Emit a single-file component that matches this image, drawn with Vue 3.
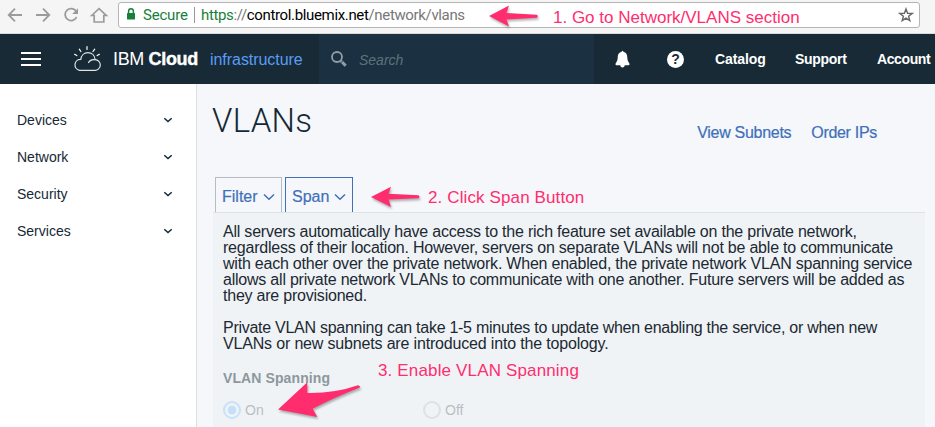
<script setup>
const menu = ['Devices', 'Network', 'Security', 'Services']
const spanInfo = [
  'All servers automatically have access to the rich feature set available on the private network,',
  'regardless of their location. However, servers on separate VLANs will not be able to communicate',
  'with each other over the private network. When enabled, the private network VLAN spanning service',
  'allows all private network VLANs to communicate with one another. Future servers will be added as',
  'they are provisioned.',
]
const spanNote = [
  'Private VLAN spanning can take 1-5 minutes to update when enabling the service, or when new',
  'VLANs or new subnets are introduced into the topology.',
]
</script>

<template>
  <div class="page">
    <div class="browser">
      <svg class="nav-icons" width="112" height="33" viewBox="0 0 112 33" fill="none" stroke="#9b9b9b" stroke-width="1.8">
        <path d="M22 15H9M15 8.700L8.700 15L15 21.300" />
        <path d="M36 15H49M43 8.700L49.300 15L43 21.300" />
        <path d="M76.300 11.500A6 6 0 1 0 76.600 17" />
        <path d="M78 8.300V14H72.200Z" fill="#9b9b9b" stroke="none" />
        <path d="M91.700 15.500L99 8.600L106.300 15.500H103.800V22H94.200V15.500Z" stroke-width="1.700" />
      </svg>
      <div class="address">
        <svg class="lock" width="10" height="13" viewBox="0 0 10 13">
          <path d="M2.600 6V3.500A2.100 2.300 0 0 1 7.400 3.500V6" fill="none" stroke="#178038" stroke-width="1.500" />
          <rect x="1" y="5" width="8" height="6.500" rx=".6" fill="#178038" />
        </svg>
        <span class="secure">Secure</span>
        <i class="divider"></i>
        <span class="url"><span class="scheme">https</span>://<b>control.bluemix.net</b>/network/vlans</span>
        <svg class="star" width="16" height="16" viewBox="0 0 16 16">
          <path d="M8 1.900L9.600 6.200L14.200 6.400L10.600 9.200L11.800 13.700L8 11.100L4.200 13.700L5.400 9.200L1.800 6.400L6.400 6.200Z" fill="none" stroke="#686868" stroke-width="1.400" />
        </svg>
      </div>
    </div>

    <header class="header">
      <div class="brand">
        <i class="burger"></i>
        <svg class="cloud" width="30" height="28" viewBox="0 0 30 28" fill="none" stroke="#fff" stroke-width="1.200" stroke-linecap="round">
          <path d="M7.500 25.300H22.800A5.300 5.300 0 0 0 23.200 14.700C22.700 10.300 19.600 7.700 15.900 7.700C12 7.700 9.200 10.500 8.800 14.400A5.500 5.500 0 0 0 7.500 25.300Z" stroke="#dce4e8" />
          <path d="M16.500 17.500C18 15.100 20.500 14.200 23 14.700" stroke="#dce4e8" />
          <path d="M2.600 9.300L4.800 10.600M7.300 4.200L8.900 6.500M15 1.500V4.500M22.700 4.200L21 6.500M27.400 9.300L25.200 10.600" />
        </svg>
        <span class="ibm">IBM <b>Cloud</b></span>
        <span class="infra">infrastructure</span>
      </div>
      <div class="search">
        <svg width="18" height="18" viewBox="0 0 18 18" fill="none" stroke="#8f9ea9">
          <circle cx="7" cy="7" r="5" stroke-width="1.800" />
          <path d="M10.700 10.700L15.700 15.700" stroke-width="3" stroke-dasharray="1.300 .6 6" />
        </svg>
        <em>Search</em>
      </div>
      <div class="actions">
        <svg class="bell" width="16" height="18" viewBox="0 0 16 18" fill="#fff">
          <path d="M7.200 1.200Q8 .3 8.800 1.200V1.800C11.700 2.400 12.800 4.500 12.800 7.500C12.900 10.200 13.600 11.500 14.800 13.200Q15.600 14.700 14.300 15.300H10.300Q10 17.500 8 17.500Q6 17.500 5.700 15.300H1.700Q.4 14.700 1.200 13.200C2.400 11.500 3.100 10.200 3.200 7.500C3.200 4.500 4.300 2.400 7.200 1.800Z" />
        </svg>
        <span class="help">?</span>
        <span class="catalog">Catalog</span>
        <span class="support">Support</span>
        <span class="account">Account</span>
      </div>
    </header>

    <div class="body">
      <nav class="sidebar">
        <div v-for="m in menu" :key="m" class="item">
          <span>{{ m }}</span>
          <svg width="10" height="8" viewBox="0 0 10 8"><path d="M1.300 2.200L5 5.600L8.700 2.200" fill="none" stroke="#152935" stroke-width="1.500" /></svg>
        </div>
      </nav>
      <main class="main">
        <div class="title-row">
          <h1>VLANs</h1>
          <div class="links"><a class="subnets">View Subnets</a><a class="ips">Order IPs</a></div>
        </div>
        <div class="tabs">
          <div class="tab filter"><span>Filter</span><svg width="12" height="8" viewBox="0 0 12 8"><path d="M1 1.500L6 6.300L11 1.500" fill="none" stroke="#4070b8" stroke-width="1.500" /></svg></div>
          <div class="tab span active"><span>Span</span><svg width="12" height="8" viewBox="0 0 12 8"><path d="M1 1.500L6 6.300L11 1.500" fill="none" stroke="#4070b8" stroke-width="1.500" /></svg></div>
        </div>
        <section class="panel">
          <p><span v-for="(l, i) in spanInfo" :key="i">{{ l }}</span></p>
          <p class="extra"><span v-for="(l, i) in spanNote" :key="i">{{ l }}</span></p>
          <h2>VLAN Spanning</h2>
          <div class="radios">
            <label class="on"><i class="radio checked"></i>On</label>
            <label><i class="radio"></i>Off</label>
          </div>
        </section>
      </main>
    </div>

    <svg class="arrows" width="935" height="427" viewBox="0 0 935 427" fill="#ff2d6e">
      <path d="M489 16L509 5.500L506.500 13L537 14.700Q538.500 16.200 537 17.700L506.500 19.500L509 26.500Z" />
      <path d="M371 197L391 186.700L388.700 193.800L418.500 195.300Q420.500 196.800 418.500 198.300L388.700 199.500L391 207Z" />
      <path d="M278 409.500L307.300 382.300V393Q334 393.500 358 385.200Q361 386 359.500 387.700Q334 397.500 312.700 408.700L317.300 417Z" />
    </svg>
    <span class="note step1">1. Go to Network/VLANS section</span>
    <span class="note step2">2. Click Span Button</span>
    <span class="note step3">3. Enable VLAN Spanning</span>
  </div>
</template>

<style>
body { margin: 0; overflow: hidden; }
</style>

<style scoped>
* { box-sizing: border-box; }
.page { position: relative; width: 935px; height: 427px; overflow: hidden; display: flex; flex-direction: column; background: #f5f7fb; font-family: "Liberation Sans", Arial, sans-serif; color: #152935; white-space: nowrap; }
.browser { height: 34px; flex: none; display: flex; background: #f5f5f5; border-bottom: 1px solid #d7dbd9; }
.nav-icons { flex: none; }
.address { margin: 2px 0 0 6px; width: 802px; height: 26px; background: #fff; border: 1px solid #b5b5b5; border-radius: 3px; display: flex; align-items: center; padding-left: 7px; font-family: Roboto, sans-serif; font-size: 15px; }
.lock { margin-top: -1px; }
.secure { color: #178038; margin-left: 7px; width: 51px; letter-spacing: -.2px; }
.divider { width: 1px; height: 16px; background: #999; }
.url { color: #777; margin-left: 6px; letter-spacing: -.35px; }
.url b { color: #000; font-weight: 400; }
.scheme { color: #178038; }
.star { margin: 0 5px 0 auto; }
.header { height: 50px; flex: none; display: flex; background: #172a35; color: #fff; }
.brand { width: 319px; display: flex; align-items: center; padding-left: 21px; }
.burger { width: 20px; height: 14px; border-top: 2px solid #fff; border-bottom: 2px solid #fff; background: linear-gradient(#fff, #fff) 0 4px / 20px 2px no-repeat; }
.cloud { margin: 0 0 0 31px; }
.ibm { font-size: 18px; margin-left: 11px; width: 97px; letter-spacing: -.35px; margin-top: 1px; }
.ibm b { -webkit-text-stroke: .4px #fff; }
.infra { font-size: 16px; color: #5a9df5; letter-spacing: -.05px; margin-top: 1px; }
.search { width: 275px; background: #1b3141; display: flex; align-items: center; padding-left: 11px; font-size: 14px; color: #5f707d; }
.search em { margin-left: 11px; margin-top: 2px; }
.actions { display: flex; align-items: center; flex: 1; font-size: 14px; font-weight: 700; letter-spacing: -.1px; padding-left: 20px; }
.bell { width: 17px; }
.help { width: 17px; height: 17px; border-radius: 50%; background: #fff; color: #172a35; text-align: center; line-height: 17px; font-size: 14px; margin-left: 36px; letter-spacing: 0; }
.catalog { margin-left: 31px; width: 80px; }
.support { width: 82px; letter-spacing: -.3px; }
.account { letter-spacing: -.4px; }
.body { display: flex; flex: 1; min-height: 0; }
.sidebar { width: 197px; flex: none; background: #fff; border-right: 1px solid #dde1e5; padding-top: 17px; }
.item { height: 37px; display: flex; align-items: center; justify-content: space-between; padding: 0 23px 0 17px; font-size: 14px; }
.main { flex: 1; padding: 0 10px 0 16px; }
.title-row { height: 93px; display: flex; justify-content: space-between; }
h1 { margin: 17px 0 0 -1px; font: 300 33px/40px Roboto, sans-serif; letter-spacing: .3px; }
.links { display: flex; padding-top: 40px; margin-right: 48px; font-size: 16px; color: #4070b8; letter-spacing: -.3px; gap: 20px; }
.links a, .tab span { -webkit-text-stroke: .2px #4070b8; }
.tabs { height: 35px; display: flex; gap: 3px; padding-left: 2px; }
.tab { height: 35px; border: 1px solid #b8bcc2; border-bottom: 0; padding: 4px 0 0 6px; display: flex; align-items: center; color: #4070b8; font-size: 16px; }
.tab svg { margin-left: 5px; }
.filter { width: 67px; }
.tabs .span { width: 68px; }
.active { border-color: #4070b8; }
.panel { height: 240px; background: #eff3f6; border-top: 1px solid #dbe2e9; padding: 11px 10px 0; font-size: 16px; line-height: 16px; color: #1c2932; }
p { margin: 0 0 16px; letter-spacing: -.22px; }
.extra { letter-spacing: -.27px; }
.extra span:last-child { letter-spacing: -.17px; }
p span { display: block; }
h2 { margin: 18px 0 0; font-size: 14px; line-height: 16px; letter-spacing: .1px; color: #8c989c; }
.radios { display: flex; margin-top: 15px; color: #b9bfc3; font-size: 14px; }
label { display: flex; align-items: center; height: 18px; }
.on { width: 200px; }
.radio { width: 18px; height: 18px; border: 2px solid #dde1e4; border-radius: 50%; margin-right: 4px; }
.checked { border-color: #c9e1f8; background: radial-gradient(circle, #c4dff9 0 4px, transparent 4.700px); }
.arrows { position: absolute; left: 0; top: 0; filter: drop-shadow(1px 2px 1px rgba(0, 0, 0, .3)); }
.note { position: absolute; color: #ff2d6e; font-size: 17px; line-height: 20px; }
.step1 { left: 553px; top: 8px; }
.step2 { left: 428px; top: 188px; letter-spacing: .12px; }
.step3 { left: 378px; top: 361px; letter-spacing: .15px; }
</style>
